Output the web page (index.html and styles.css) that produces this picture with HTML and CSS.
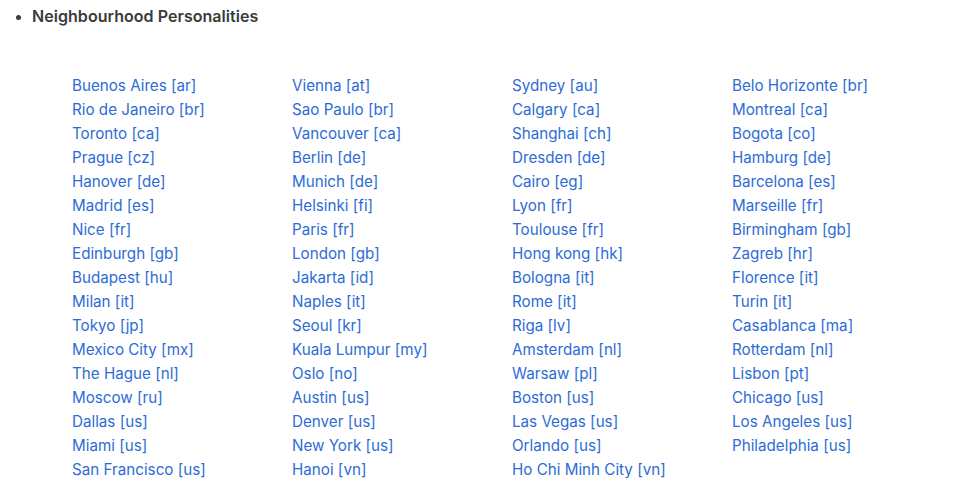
FILE: index.html
```html
<!DOCTYPE html>
<html>
<head>
<meta charset="utf-8">
<link rel="stylesheet" href="styles.css">
</head>
<body>
<ul class="sections">
  <li class="section">
    <span class="title">Neighbourhood Personalities</span>
    <div class="cities">
      <a href="#">Buenos Aires [ar]</a><a href="#">Vienna [at]</a><a href="#">Sydney [au]</a><a href="#">Belo Horizonte [br]</a>
      <a href="#">Rio de Janeiro [br]</a><a href="#">Sao Paulo [br]</a><a href="#">Calgary [ca]</a><a href="#">Montreal [ca]</a>
      <a href="#">Toronto [ca]</a><a href="#">Vancouver [ca]</a><a href="#">Shanghai [ch]</a><a href="#">Bogota [co]</a>
      <a href="#">Prague [cz]</a><a href="#">Berlin [de]</a><a href="#">Dresden [de]</a><a href="#">Hamburg [de]</a>
      <a href="#">Hanover [de]</a><a href="#">Munich [de]</a><a href="#">Cairo [eg]</a><a href="#">Barcelona [es]</a>
      <a href="#">Madrid [es]</a><a href="#">Helsinki [fi]</a><a href="#">Lyon [fr]</a><a href="#">Marseille [fr]</a>
      <a href="#">Nice [fr]</a><a href="#">Paris [fr]</a><a href="#">Toulouse [fr]</a><a href="#">Birmingham [gb]</a>
      <a href="#">Edinburgh [gb]</a><a href="#">London [gb]</a><a href="#">Hong kong [hk]</a><a href="#">Zagreb [hr]</a>
      <a href="#">Budapest [hu]</a><a href="#">Jakarta [id]</a><a href="#">Bologna [it]</a><a href="#">Florence [it]</a>
      <a href="#">Milan [it]</a><a href="#">Naples [it]</a><a href="#">Rome [it]</a><a href="#">Turin [it]</a>
      <a href="#">Tokyo [jp]</a><a href="#">Seoul [kr]</a><a href="#">Riga [lv]</a><a href="#">Casablanca [ma]</a>
      <a href="#">Mexico City [mx]</a><a href="#">Kuala Lumpur [my]</a><a href="#">Amsterdam [nl]</a><a href="#">Rotterdam [nl]</a>
      <a href="#">The Hague [nl]</a><a href="#">Oslo [no]</a><a href="#">Warsaw [pl]</a><a href="#">Lisbon [pt]</a>
      <a href="#">Moscow [ru]</a><a href="#">Austin [us]</a><a href="#">Boston [us]</a><a href="#">Chicago [us]</a>
      <a href="#">Dallas [us]</a><a href="#">Denver [us]</a><a href="#">Las Vegas [us]</a><a href="#">Los Angeles [us]</a>
      <a href="#">Miami [us]</a><a href="#">New York [us]</a><a href="#">Orlando [us]</a><a href="#">Philadelphia [us]</a>
      <a href="#">San Francisco [us]</a><a href="#">Hanoi [vn]</a><a href="#">Ho Chi Minh City [vn]</a>
    </div>
  </li>
</ul>
</body>
</html>
```

FILE: styles.css
```css
html, body {
  margin: 0;
  padding: 0;
  background: #ffffff;
}
body {
  font-family: Inter, "Noto Sans", sans-serif;
  font-size: 16px;
  color: #3a3a3a;
}
.sections {
  margin: 0;
  padding: 4px 0 0 32px;
  list-style: disc;
}
.section {
  line-height: 24px;
}
.section::marker {
  font-size: 14px;
}
.title {
  font-weight: 600;
  font-size: 16px;
  letter-spacing: 0.05px;
}
.cities {
  display: grid;
  grid-template-columns: repeat(4, 220px);
  grid-auto-rows: 24px;
  margin: 46px 0 0 40px;
}
.cities a {
  color: #2d6cd6;
  text-decoration: none;
  white-space: nowrap;
  font-size: 15.2px;
  line-height: 24px;
}
```
